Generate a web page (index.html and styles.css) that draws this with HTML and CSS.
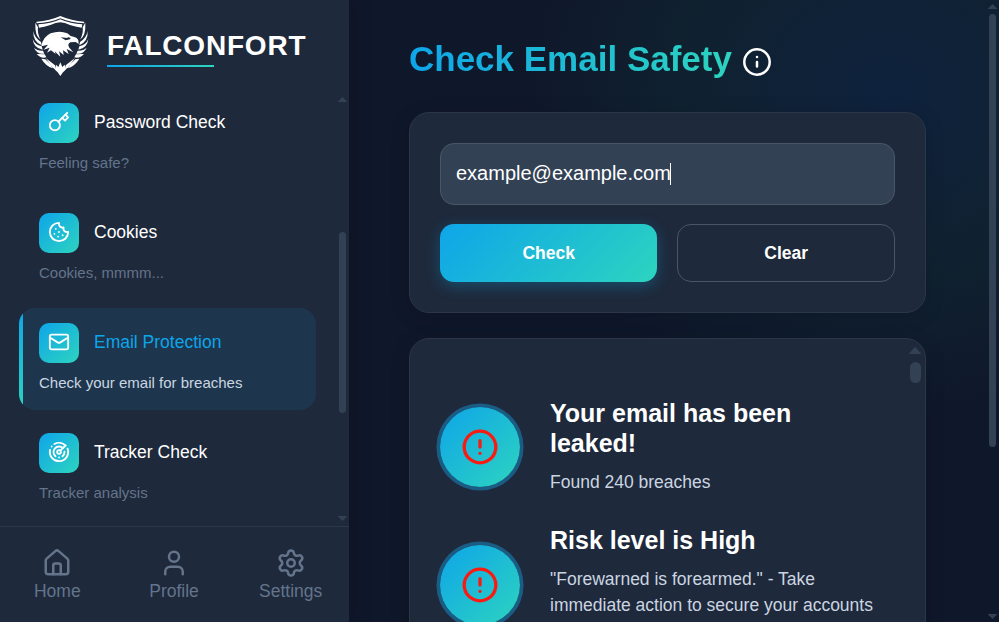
FILE: index.html
```html
<!DOCTYPE html>
<html lang="en">
<head>
<meta charset="utf-8">
<title>Falconfort</title>
<link rel="stylesheet" href="styles.css">
</head>
<body>
<svg class="defs" width="0" height="0" aria-hidden="true">
  <symbol id="alert" viewBox="0 0 24 24"><circle cx="12" cy="12" r="10"/><path d="M12 8v4M12 16h.01"/></symbol>
</svg>
<div class="app">
  <aside class="sidebar">
    <header class="brand">
      <svg class="crest" viewBox="36 30 174 186" aria-hidden="true">
        <path d="M50 50 Q90 47 121 33 Q154 47 192 50 L193 55 Q153 53 121 40 Q89 53 49 55Z"/>
        <path d="M55 58 Q92 57 121 43 Q151 57 187 58 L185 68 Q172 67 150 60 Q134 53 121 52 Q108 53 91 60 Q72 67 57 68Z"/>
        <path d="M46 53 L54 67 Q51 86 62 104 Q44 93 46 53Z"/>
        <path d="M40 78 Q43 98 63 111 L65 121 Q38 109 40 78Z"/>
        <path d="M38 102 Q44 119 65 124 L68 134 Q41 130 38 102Z"/>
        <path d="M42 128 Q52 138 69 137 L73 146 Q51 149 42 128Z"/>
        <path d="M50 147 L74 148 L79 157 Q62 161 50 147Z"/>
        <path d="M196 53 L188 67 Q191 86 180 104 Q198 93 196 53Z"/>
        <path d="M203 78 Q200 98 180 111 L178 121 Q205 109 203 78Z"/>
        <path d="M205 102 Q199 119 178 124 L175 134 Q202 130 205 102Z"/>
        <path d="M200 128 Q190 138 173 137 L169 146 Q191 149 200 128Z"/>
        <path d="M192 147 L168 148 L163 157 Q180 161 192 147Z"/>
        <path d="M64 161 Q76 182 98 190 L91 177 L76 163Z"/>
        <path d="M77 159 L105 181 L108 196 L97 187Z"/>
        <path d="M178 161 Q166 182 144 190 L151 177 L166 163Z"/>
        <path d="M165 159 L137 181 L134 196 L145 187Z"/>
        <path d="M121 172 L127 186 L134 179 L137 194 L129 202 L121 213 L113 202 L105 194 L108 179 L115 186Z"/>
        <path fill-rule="evenodd" d="M64 124 Q68 96 92 85 Q119 76 142 85 L152 93 Q171 96 175 106 L176 117 L167 111 L151 112 Q141 118 148 128 L160 142 L140 132 L146 147 L129 136 L131 150 L117 139 L121 155 L104 139 L107 147 L93 136 L81 143 L89 128 L71 134 L84 119Z M122 97 L137 106 L150 103 L152 99 L143 96 L143 99Z"/>
      </svg>
      <div class="brand-name">FALCONFORT</div>
    </header>
    <div class="nav-wrap">
      <nav class="nav">
        <a class="item">
          <span class="row"><span class="tile"><svg viewBox="0 0 24 24"><path d="m15.5 7.5 3 3L22 7l-3-3"/><path d="m21 2-9.6 9.6"/><circle cx="7.5" cy="15.5" r="5.5"/></svg></span><span class="label">Password Check</span></span>
          <span class="hint">Feeling safe?</span>
        </a>
        <a class="item">
          <span class="row"><span class="tile"><svg viewBox="0 0 24 24"><path d="M12 2a10 10 0 1 0 10 10 4 4 0 0 1-5-5 4 4 0 0 1-5-5"/><path d="M8.5 8.5v.01M16 15.5v.01M12 12v.01M11 17v.01M7 14v.01"/></svg></span><span class="label">Cookies</span></span>
          <span class="hint">Cookies, mmmm...</span>
        </a>
        <a class="item active">
          <span class="row"><span class="tile"><svg viewBox="0 0 24 24"><rect x="2" y="4" width="20" height="16" rx="2"/><path d="m22 7-8.97 5.7a1.94 1.94 0 0 1-2.06 0L2 7"/></svg></span><span class="label">Email Protection</span></span>
          <span class="hint">Check your email for breaches</span>
        </a>
        <a class="item">
          <span class="row"><span class="tile"><svg viewBox="0 0 24 24"><path d="M19.07 4.93A10 10 0 0 0 6.99 3.34M4 6h.01M2.29 9.62A10 10 0 1 0 21.31 8.35M16.24 7.76A6 6 0 1 0 8.23 16.67M12 18h.01M17.99 11.66A6 6 0 0 1 15.77 16.67"/><circle cx="12" cy="12" r="2"/><path d="m13.41 10.59 5.66-5.66"/></svg></span><span class="label">Tracker Check</span></span>
          <span class="hint">Tracker analysis</span>
        </a>
      </nav>
      <div class="bar nav-bar"><i class="up"></i><i class="thumb"></i><i class="down"></i></div>
    </div>
    <footer class="tabs">
      <a class="tab"><svg viewBox="0 0 24 24"><path d="M15 21v-7a1.6 1.6 0 0 0-1.6-1.6h-2.8A1.6 1.6 0 0 0 9 14v7"/><path d="M3 10a2 2 0 0 1 .71-1.53l7-6a2 2 0 0 1 2.58 0l7 6A2 2 0 0 1 21 10v9a2 2 0 0 1-2 2H5a2 2 0 0 1-2-2z"/></svg>Home</a>
      <a class="tab"><svg viewBox="0 0 24 24"><path d="M19 21v-2a4 4 0 0 0-4-4H9a4 4 0 0 0-4 4v2"/><circle cx="12" cy="7" r="4"/></svg>Profile</a>
      <a class="tab"><svg viewBox="0 0 24 24"><path d="M9.67 4.14a2.34 2.34 0 0 1 4.66 0 2.34 2.34 0 0 0 3.32 1.91 2.34 2.34 0 0 1 2.33 4.04 2.34 2.34 0 0 0 0 3.83 2.34 2.34 0 0 1-2.33 4.03 2.34 2.34 0 0 0-3.32 1.92 2.34 2.34 0 0 1-4.66 0 2.34 2.34 0 0 0-3.32-1.92 2.34 2.34 0 0 1-2.33-4.03 2.34 2.34 0 0 0 0-3.83 2.34 2.34 0 0 1 2.33-4.04 2.34 2.34 0 0 0 3.32-1.91"/><circle cx="12" cy="12" r="3"/></svg>Settings</a>
    </footer>
  </aside>
  <main class="main">
    <div class="content">
      <div class="title-row">
        <h1>Check Email Safety</h1>
        <svg class="info" viewBox="0 0 28 28"><circle cx="14" cy="14" r="12.7"/><path d="M14 14v4.5M14 8.9v.01"/></svg>
      </div>
      <section class="card form">
        <div class="field">example@example.com<i class="caret"></i></div>
        <div class="buttons"><button class="primary">Check</button><button class="ghost">Clear</button></div>
      </section>
      <section class="card results">
        <div class="list">
          <article class="result">
            <span class="badge"><svg><use href="#alert"/></svg></span>
            <div><h2>Your email has been leaked!</h2><p>Found 240 breaches</p></div>
          </article>
          <article class="result tall">
            <span class="badge"><svg><use href="#alert"/></svg></span>
            <div><h2>Risk level is High</h2><p>"Forewarned is forearmed." - Take immediate action to secure your accounts</p></div>
          </article>
        </div>
        <div class="bar result-bar"><i class="up"></i><i class="thumb"></i></div>
      </section>
    </div>
    <div class="bar page-bar"><i class="up"></i><i class="thumb"></i><i class="down"></i></div>
  </main>
</div>
</body>
</html>
```
FILE: styles.css
```css
* { box-sizing: border-box; }
html, body { margin: 0; height: 100%; overflow: hidden; }
body { font-family: "Liberation Sans", Arial, sans-serif; color: #fff; background: #0f172a; }
svg { fill: none; stroke: currentColor; stroke-width: 2; stroke-linecap: round; stroke-linejoin: round; flex: none; }
.defs { position: absolute; }
.app { display: flex; height: 622px; overflow: hidden; }

.sidebar { width: 349px; flex: none; display: flex; flex-direction: column; background: #1e293b; box-shadow: 4px 0 20px rgba(0, 0, 0, .15); z-index: 1; }
.brand { height: 95px; flex: none; display: flex; align-items: flex-start; padding: 15px 0 0 32px; gap: 17px; }
.crest { width: 58px; height: 62px; fill: #fff; stroke: none; }
.brand-name { margin-top: 14px; height: 38px; line-height: 34px; font-size: 28px; font-weight: 700; letter-spacing: .8px; background: linear-gradient(90deg, #0ea5e9, #2dd4bf) 0 100% / 107px 2px no-repeat; }
.nav-wrap { height: 431px; flex: none; display: flex; justify-content: space-between; overflow: hidden; }
.nav { width: 297px; margin-left: 19px; margin-top: -7px; display: flex; flex-direction: column; gap: 8px; }
.item { position: relative; height: 102px; flex: none; padding: 15px 20px; border-radius: 16px; overflow: hidden; }
.row { display: flex; align-items: center; gap: 15px; height: 40px; font-size: 17.5px; }
.label { padding-bottom: 2px; }
.tile { width: 40px; height: 40px; border-radius: 10px; display: grid; place-items: center; color: #fff; background: linear-gradient(135deg, #0ea5e9, #2dd4bf); }
.tile svg { width: 22px; height: 22px; margin-top: -2px; }
.hint { display: block; margin-top: 11px; line-height: 18px; font-size: 15px; color: #64748b; }
.active { background: #1d364d; color: #0ea5e9; }
.active::before { content: ""; position: absolute; inset: 0 auto 0 0; width: 4px; background: linear-gradient(#0ea5e9, #2dd4bf); }
.active .hint { color: #cbd5e1; }
.tabs { flex: 1; border-top: 1px solid #2c3749; display: flex; margin-left: -1px; }
.tab { width: 116.7px; display: flex; flex-direction: column; align-items: center; padding-top: 21px; font-size: 17.5px; line-height: 20px; gap: 3px; color: #64748b; }
.tab svg { width: 30px; height: 30px; }

.bar { display: flex; flex-direction: column; align-items: center; }
.bar i { flex: none; }
.thumb { background: #334155; border-radius: 6px; }
.up, .down { width: 10px; height: 5px; background: #334155; clip-path: polygon(50% 0, 100% 100%, 0 100%); }
.down { clip-path: polygon(0 0, 100% 0, 50% 100%); margin-top: auto; }
.nav-bar { width: 13px; padding: 2px 0 5px; }
.nav-bar .thumb { width: 7px; height: 181px; margin-top: 130px; }

.main { flex: 1; display: flex; justify-content: space-between; background: radial-gradient(ellipse 375px 330px at 538px 95px, rgba(14, 130, 233, .1) 0, rgba(20, 180, 130, .065) 52%, transparent 100%) #0f172a; }
.content { width: 517px; margin-left: 60px; padding-top: 36px; }
.title-row { display: flex; height: 76px; gap: 11px; }
h1 { margin: 0; height: 46px; line-height: 46px; font-size: 35px; color: transparent; background: linear-gradient(90deg, #0ea5e9, #2dd4bf); -webkit-background-clip: text; background-clip: text; }
.info { width: 28px; height: 28px; margin-top: 12px; stroke-width: 2.5; }
.card { background: #1e293b; border: 1px solid #2b3648; border-radius: 20px; box-shadow: 0 4px 20px rgba(0, 0, 0, .15); }
.form { height: 201px; padding: 30px; }
.field { display: flex; align-items: center; height: 62px; padding: 0 15px 1px; background: #334155; border: 1px solid #4a5668; border-radius: 14px; font-size: 20px; }
.caret { width: 1px; height: 22px; background: #fff; margin-left: -1px; }
.buttons { display: flex; gap: 20px; margin-top: 19px; }
button { flex: 1; height: 58px; padding: 0 0 0 1px; border: 0; border-radius: 14px; color: #fff; font: 700 17.5px "Liberation Sans", Arial, sans-serif; }
.primary { background: linear-gradient(135deg, #0ea5e9, #2dd4bf); box-shadow: 0 4px 15px rgba(14, 165, 233, .3); }
.ghost { background: none; border: 1px solid #4a5668; }
.results { height: 400px; margin-top: 25px; display: flex; justify-content: space-between; }
.list { width: 470px; padding: 60px 0 0 30px; }
.result { display: flex; align-items: center; gap: 30px; height: 96px; }
.tall { height: 118px; margin-top: 31px; }
.tall p { min-height: 78px; }
.badge { width: 80px; height: 80px; flex: none; border-radius: 50%; display: grid; place-items: center; color: #f91b12; background: linear-gradient(135deg, #0ea5e9, #2dd4bf); box-shadow: 0 0 0 3.6px #1a5c84; }
.badge svg { width: 38px; height: 38px; stroke-width: 2.1; }
h2 { margin: -1px 0 0; font-size: 25px; line-height: 30px; }
p { margin: 11px 0 0; font-size: 17.5px; line-height: 26px; color: #cbd5e1; }
.result-bar { width: 20px; padding-top: 8px; }
.result-bar .up { width: 13px; height: 7px; }
.result-bar .thumb { width: 11px; height: 21px; margin-top: 8px; }
.page-bar { width: 13px; padding: 4px 0 3px; }
.page-bar .thumb { width: 7px; height: 433px; margin-top: 5px; }
```
